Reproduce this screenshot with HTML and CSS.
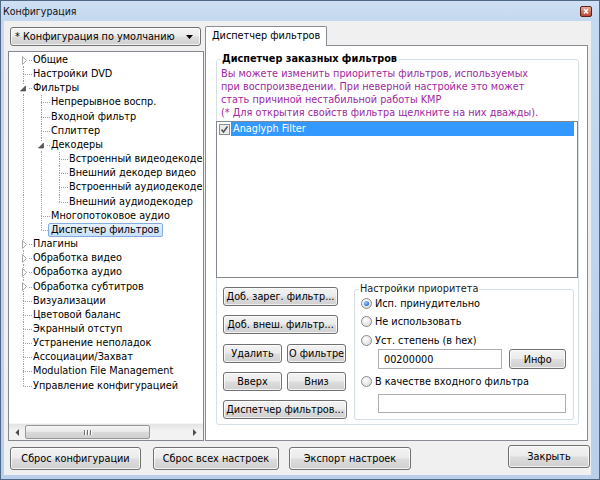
FILE: index.html
```html
<!DOCTYPE html>
<html lang="ru">
<head>
<meta charset="utf-8">
<title>Конфигурация</title>
<link rel="stylesheet" href="styles.css">
</head>
<body>
<div class="window">
  <div class="titlebar">
    <span class="title">Конфигурация</span>
    <span class="close"><svg width="12" height="11" viewBox="0 0 12 11"><defs><linearGradient id="cg" x1="0" y1="0" x2="0" y2="1"><stop offset="0" stop-color="#eab3a5"/><stop offset="0.5" stop-color="#d27563"/><stop offset="1" stop-color="#b8402f"/></linearGradient></defs><rect x="0.5" y="0.5" width="11" height="10" rx="1.5" fill="url(#cg)" stroke="#5e2219"/><path d="M4 3 L8 7.5 M8 3 L4 7.5" stroke="#fff" stroke-width="1.6"/></svg></span>
  </div>
  <div class="client">
    <div class="main">
      <div class="left">
        <div class="combo"><span class="combo-text">* Конфигурация по умолчанию</span><svg class="combo-arrow" width="7" height="4" viewBox="0 0 7 4"><path d="M0 0 H7 L3.5 4 Z" fill="#000"/></svg></div>
        <div class="tree">
          <div class="tree-view">
            <div class="row"><span class="c first"><span class="up"></span><span class="dn"></span><svg class="exp" width="9" height="9" viewBox="0 0 9 9"><path d="M2.5 0.5 L6.5 4.5 L2.5 8.5 Z" fill="#fff" stroke="#a6a6a6"/></svg></span><span class="t">Общие</span></div>
            <div class="row"><span class="c"><span class="up"></span><span class="dn"></span></span><span class="t">Настройки DVD</span></div>
            <div class="row"><span class="c"><span class="up"></span><span class="dn"></span><svg class="exp" width="9" height="9" viewBox="0 0 9 9"><path d="M5.5 2 L5.5 7 L0.5 7 Z" fill="#595959" stroke="#3a3a3a" stroke-width="0.6"/></svg></span><span class="t">Фильтры</span></div>
            <div class="row"><span class="g v"></span><span class="c"><span class="up"></span><span class="dn"></span></span><span class="t">Непрерывное воспр.</span></div>
            <div class="row"><span class="g v"></span><span class="c"><span class="up"></span><span class="dn"></span></span><span class="t">Входной фильтр</span></div>
            <div class="row"><span class="g v"></span><span class="c"><span class="up"></span><span class="dn"></span></span><span class="t">Сплиттер</span></div>
            <div class="row"><span class="g v"></span><span class="c"><span class="up"></span><span class="dn"></span><svg class="exp" width="9" height="9" viewBox="0 0 9 9"><path d="M5.5 2 L5.5 7 L0.5 7 Z" fill="#595959" stroke="#3a3a3a" stroke-width="0.6"/></svg></span><span class="t">Декодеры</span></div>
            <div class="row"><span class="g v"></span><span class="g v"></span><span class="c"><span class="up"></span><span class="dn"></span></span><span class="t">Встроенный видеодекодер</span></div>
            <div class="row"><span class="g v"></span><span class="g v"></span><span class="c"><span class="up"></span><span class="dn"></span></span><span class="t">Внешний декодер видео</span></div>
            <div class="row"><span class="g v"></span><span class="g v"></span><span class="c"><span class="up"></span><span class="dn"></span></span><span class="t">Встроенный аудиодекодер</span></div>
            <div class="row"><span class="g v"></span><span class="g v"></span><span class="c last"><span class="up"></span><span class="dn"></span></span><span class="t">Внешний аудиодекодер</span></div>
            <div class="row"><span class="g v"></span><span class="c"><span class="up"></span><span class="dn"></span></span><span class="t">Многопотоковое аудио</span></div>
            <div class="row"><span class="g v"></span><span class="c last"><span class="up"></span><span class="dn"></span></span><span class="t sel">Диспетчер фильтров</span></div>
            <div class="row"><span class="c"><span class="up"></span><span class="dn"></span><svg class="exp" width="9" height="9" viewBox="0 0 9 9"><path d="M2.5 0.5 L6.5 4.5 L2.5 8.5 Z" fill="#fff" stroke="#a6a6a6"/></svg></span><span class="t">Плагины</span></div>
            <div class="row"><span class="c"><span class="up"></span><span class="dn"></span><svg class="exp" width="9" height="9" viewBox="0 0 9 9"><path d="M2.5 0.5 L6.5 4.5 L2.5 8.5 Z" fill="#fff" stroke="#a6a6a6"/></svg></span><span class="t">Обработка видео</span></div>
            <div class="row"><span class="c"><span class="up"></span><span class="dn"></span><svg class="exp" width="9" height="9" viewBox="0 0 9 9"><path d="M2.5 0.5 L6.5 4.5 L2.5 8.5 Z" fill="#fff" stroke="#a6a6a6"/></svg></span><span class="t">Обработка аудио</span></div>
            <div class="row"><span class="c"><span class="up"></span><span class="dn"></span><svg class="exp" width="9" height="9" viewBox="0 0 9 9"><path d="M2.5 0.5 L6.5 4.5 L2.5 8.5 Z" fill="#fff" stroke="#a6a6a6"/></svg></span><span class="t">Обработка субтитров</span></div>
            <div class="row"><span class="c"><span class="up"></span><span class="dn"></span></span><span class="t">Визуализации</span></div>
            <div class="row"><span class="c"><span class="up"></span><span class="dn"></span></span><span class="t">Цветовой баланс</span></div>
            <div class="row"><span class="c"><span class="up"></span><span class="dn"></span></span><span class="t">Экранный отступ</span></div>
            <div class="row"><span class="c"><span class="up"></span><span class="dn"></span></span><span class="t">Устранение неполадок</span></div>
            <div class="row"><span class="c"><span class="up"></span><span class="dn"></span></span><span class="t">Ассоциации/Захват</span></div>
            <div class="row"><span class="c"><span class="up"></span><span class="dn"></span></span><span class="t">Modulation File Management</span></div>
            <div class="row"><span class="c last"><span class="up"></span><span class="dn"></span></span><span class="t">Управление конфигурацией</span></div>
          </div>
          <div class="hscroll">
            <span class="sb-btn"><svg width="4" height="7" viewBox="0 0 4 7"><path d="M4 0 V7 L0.5 3.5 Z" fill="#4d4d4d"/></svg></span>
            <span class="sb-thumb"><span class="grip"></span><span class="grip"></span><span class="grip"></span></span>
            <span class="sb-track"></span>
            <span class="sb-btn"><svg width="4" height="7" viewBox="0 0 4 7"><path d="M0 0 V7 L3.5 3.5 Z" fill="#4d4d4d"/></svg></span>
          </div>
        </div>
      </div>
      <div class="right">
        <div class="tabs"><div class="tab">Диспетчер фильтров</div></div>
        <div class="tabpanel">
          <fieldset class="group main-group">
            <legend class="legend-bold">Диспетчер заказных фильтров</legend>
            <p class="hint">Вы можете изменить приоритеты фильтров, используемых<br>при воспроизведении. При неверной настройке это может<br>стать причиной нестабильной работы KMP<br>(* Для открытия свойств фильтра щелкните на них дважды).</p>
            <div class="listbox">
              <div class="list-item">
                <svg class="check" width="11" height="11" viewBox="0 0 11 11"><rect x="0.5" y="0.5" width="10" height="10" fill="#ececec" stroke="#8e8f8f"/><path d="M2.5 5.5 L4.5 8 L8.5 2.5" fill="none" stroke="#505050" stroke-width="1.5"/></svg>
                <span class="item-text">Anaglyph Filter</span>
              </div>
            </div>
            <div class="lower">
              <div class="btncol">
                <button class="btn w115">Доб. зарег. фильтр...</button>
                <button class="btn w115">Доб. внеш. фильтр...</button>
                <div class="pair"><button class="btn w59">Удалить</button><button class="btn w59">О фильтре</button></div>
                <div class="pair"><button class="btn w59">Вверх</button><button class="btn w59">Вниз</button></div>
                <button class="btn w124">Диспетчер фильтров...</button>
              </div>
              <fieldset class="group prio">
                <legend class="legend-normal">Настройки приоритета</legend>
                <div class="radio-row r1"><span class="radio on"></span><span>Исп. принудительно</span></div>
                <div class="radio-row r2"><span class="radio"></span><span>Не использовать</span></div>
                <div class="radio-row r3"><span class="radio"></span><span>Уст. степень (в hex)</span></div>
                <div class="input-row"><span class="input hex">00200000</span><button class="btn info">Инфо</button></div>
                <div class="radio-row r4"><span class="radio"></span><span>В качестве входного фильтра</span></div>
                <div class="input-row r5"><span class="input wide"></span></div>
              </fieldset>
            </div>
          </fieldset>
        </div>
      </div>
    </div>
    <div class="footer">
      <button class="btn fb w131">Сброс конфигурации</button>
      <button class="btn fb w126">Сброс всех настроек</button>
      <button class="btn fb w122">Экспорт настроек</button>
      <button class="btn fb close-btn">Закрыть</button>
    </div>
  </div>
</div>
</body>
</html>
```

FILE: styles.css
```css
* { box-sizing: border-box; }
html, body { margin: 0; padding: 0; }
body {
  width: 600px; height: 480px; overflow: hidden;
  font-family: "DejaVu Sans Condensed", "DejaVu Sans", sans-serif;
  font-size: 10.8px; color: #000;
  background: #c4d8ef;
}
.window {
  width: 600px; height: 480px;
  border: 1px solid #4e6886;
  background: linear-gradient(to bottom, #c6daf1, #b9cfea);
  display: flex; flex-direction: column;
}
.titlebar {
  height: 20px; flex: none;
  display: flex; align-items: center; justify-content: space-between;
  padding: 0 7px 0 2px;
  background: linear-gradient(to bottom, #cfe0f4, #c3d7ef);
}
.title { font-size: 10.5px; color: #111; }
.close { display: flex; width: 12px; height: 11px; margin-top: 1px; }

.client {
  height: 454px; flex: none;
  margin: 0 8px 0 3px;
  background: #f0f0f0;
  padding: 5px 3px 0 4px;
  display: flex; flex-direction: column;
}
.main { display: flex; height: 415px; flex: none; }
.left { width: 196px; flex: none; display: flex; flex-direction: column; padding-top: 1px; }

.btn, .combo {
  font-family: inherit; font-size: 10.8px; color: #000;
  border: 1px solid #707070; border-radius: 3px;
  background: linear-gradient(to bottom, #f3f3f3 0%, #ebebeb 48%, #dddddd 52%, #cfcfcf 100%);
  box-shadow: inset 0 0 0 1px rgba(255,255,255,0.75);
  padding: 0; margin: 0;
  display: flex; align-items: center; justify-content: center;
  white-space: nowrap;
}
.combo {
  height: 19px; margin: 0 3px 0 2px;
  justify-content: space-between;
  padding: 0 7px 0 4px;
}
.combo-arrow { display: block; }

.tree {
  margin-top: 5px; height: 390px;
  border: 1px solid #828790; background: #fff;
  display: flex; flex-direction: column;
}
.tree-view { flex: 1; overflow: hidden; padding: 1px 0 0 5px; }
.row { display: flex; height: 14.17px; white-space: nowrap; }
.g { width: 18px; flex: none; }
.g.v {
  background: linear-gradient(to bottom, #a0a0a0 50%, transparent 50%) 9px 0 / 1px 2px repeat-y;
}
.c {
  width: 18px; flex: none;
  display: grid; grid-template-columns: 9px 9px; grid-template-rows: 7px 1fr;
}
.c .up { grid-column: 2; grid-row: 1; border-left: 1px dotted #a0a0a0; }
.c .dn { grid-column: 2; grid-row: 2; border-left: 1px dotted #a0a0a0; border-top: 1px dotted #a0a0a0; }
.c.last .dn { border-left-color: transparent; }
.c.first .up { border-left-color: transparent; }
.c .exp {
  grid-column: 1 / 3; grid-row: 1 / 3;
  align-self: center; justify-self: start;
  margin-left: 6px; background: #fff; display: block;
}
.t { padding-left: 1px; line-height: 14.17px; }
.t.sel {
  margin-left: -2px; padding: 0 3px 0 2px;
  line-height: 12.17px;
  border: 1px solid #84acdd; border-radius: 2px;
  background: linear-gradient(to bottom, #e6f1fd, #c9e0fb);
}

.hscroll {
  height: 17px; flex: none;
  display: flex; align-items: center;
  background: linear-gradient(to bottom, #e3e3e3, #f2f2f2 40%, #f2f2f2);
  border-top: 1px solid #f7f7f7;
}
.sb-btn { width: 16px; height: 16px; flex: none; display: flex; align-items: center; justify-content: center; }
.sb-thumb {
  width: 125px; height: 14px; flex: none;
  border: 1px solid #979797; border-radius: 2px;
  background: linear-gradient(to bottom, #f5f5f5, #e8e8e8 50%, #d9d9d9 51%, #d0d0d0);
  display: flex; align-items: center; justify-content: center; gap: 1px;
}
.grip { width: 1px; height: 5px; background: #6e6e6e; box-shadow: 1px 0 0 #fff; margin-right: 1px; }
.sb-track { flex: 1; }

.right { width: 383px; flex: none; margin-left: 1px; display: flex; flex-direction: column; }
.tabs { height: 19px; flex: none; display: flex; padding-left: 0; }
.tab {
  position: relative; z-index: 1;
  height: 20px; padding: 0 6px 0 6px;
  border: 1px solid #898c95; border-bottom: 0;
  border-radius: 2px 2px 0 0;
  background: #fff; line-height: 18px;
}
.tabpanel {
  height: 396px; flex: none;
  border: 1px solid #898c95; background: #fff;
  padding: 6px 8px 0 10px;
}

.group {
  margin: 0; min-width: 0;
  border: 1px solid #d5dfe5; border-radius: 3px;
}
.main-group { padding: 0 0 4px 0; }
.legend-bold { font-weight: bold; line-height: 14px; padding: 0 2px; margin-left: 3px; }
.hint {
  margin: 1px 0 0 0; padding-left: 4px;
  line-height: 13px; color: #a0289f;
  white-space: nowrap;
}
.listbox {
  margin: 2px 0 0 -1px; height: 157px;
  border: 1px solid #828790; background: #fff;
  padding-top: 0;
}
.list-item { display: flex; align-items: center; height: 14px; padding: 0 3px 0 2px; }
.check { display: block; flex: none; margin-right: 1px; }
.item-text {
  flex: 1; height: 14px; line-height: 14px;
  background: #3399ff; color: #fff; padding-left: 2px;
}

.lower { display: flex; align-items: flex-start; margin-top: 4px; padding-left: 6px; }
.btncol { width: 124px; flex: none; padding-top: 5px; display: flex; flex-direction: column; gap: 9.3px; }
.btncol .btn, .pair .btn { height: 19px; }
.pair { display: flex; justify-content: space-between; width: 123px; }
.w115 { width: 115px; }
.w59 { width: 59px; }
.w124 { width: 124px; }

.prio { width: 220px; margin-left: 7px; padding: 0 7px 6px 6px; flex: none; }
.legend-normal { line-height: 14px; padding: 0 1px; margin-left: -2px; color: #1a1a1a; }
.radio-row { display: flex; align-items: center; height: 14px; gap: 3px; }
.r2 { margin-top: 4px; }
.r3 { margin-top: 5px; }
.r4 { margin-top: 5px; }
.radio {
  width: 11px; height: 11px; border-radius: 50%; flex: none;
  border: 1px solid #8b8b8b;
  background: radial-gradient(circle at 40% 35%, #ffffff, #e6e6e6 60%, #cfcfcf);
  display: flex; align-items: center; justify-content: center;
}
.radio.on::after {
  content: ""; width: 5px; height: 5px; border-radius: 50%;
  background: radial-gradient(circle at 40% 35%, #9fd0ff, #2f6fc0 70%, #1d4f96);
}
.input-row { display: flex; align-items: center; margin-top: 2px; padding-left: 17px; gap: 7px; }
.input {
  height: 20px; border: 1px solid #abadb3; background: #fff;
  display: flex; align-items: center; padding-left: 5px;
}
.hex { width: 125px; }
.btn.info { width: 57px; height: 20px; }
.r5 { margin-top: 6px; }
.wide { width: 189px; height: 19px; }

.footer { display: flex; align-items: flex-start; margin-top: 6px; padding-left: 2px; }
.btn.fb { height: 23px; }
.w131 { width: 131px; }
.w126 { width: 126px; margin-left: 12px; }
.w122 { width: 122px; margin-left: 10px; }
.close-btn { width: 82px; margin-left: auto; margin-right: -2px; margin-top: -2px; }
```
